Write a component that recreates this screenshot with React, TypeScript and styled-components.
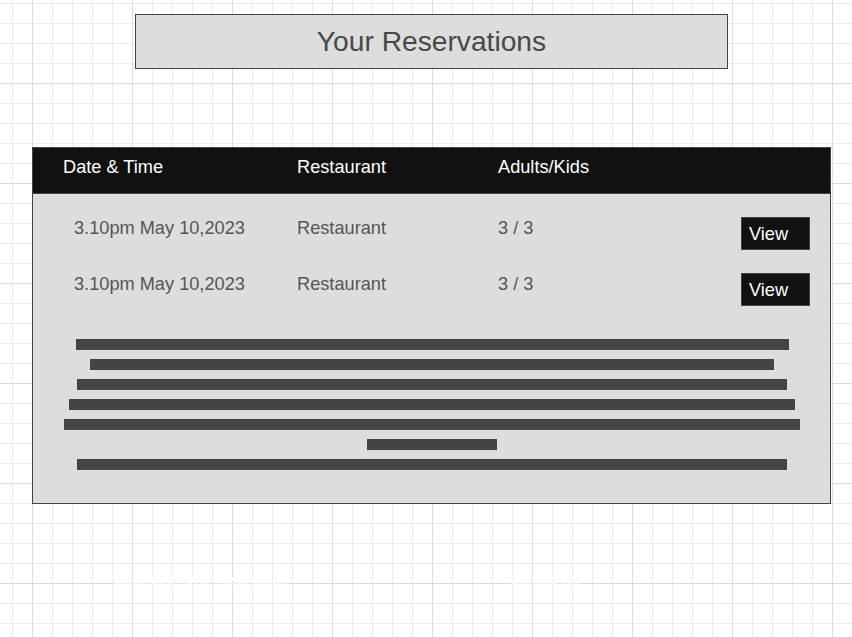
import React from 'react';
import styled, { createGlobalStyle } from 'styled-components';

const GlobalStyle = createGlobalStyle`
    html, body {
        margin: 0;
        padding: 0;
    }
    body {
        font-family: 'Liberation Sans', Arial, sans-serif;
        background-color: #fff;
        background-image:
            linear-gradient(to right, #dcdcdc 1px, transparent 1px),
            linear-gradient(to bottom, #dcdcdc 1px, transparent 1px),
            linear-gradient(to right, #ececec 1px, transparent 1px),
            linear-gradient(to bottom, #ececec 1px, transparent 1px);
        background-size: 100px 100px, 100px 100px, 20px 20px, 20px 20px;
        background-position: 32px 0, 0 83px, 12px 0, 0 3px;
        min-height: 637px;
    }
`;

const Page = styled.div`
    width: 799px;
    padding: 14px 0 0 32px;
    display: flex;
    flex-direction: column;
`;

const TitleBox = styled.div`
    margin-left: 103px;
    width: 591px;
    height: 53px;
    border: 1px solid #444;
    background: #ddd;
    display: flex;
    align-items: center;
    justify-content: center;
    color: #484848;
    font-size: 28.2px;
`;

const Panel = styled.section`
    margin-top: 78px;
    border: 1px solid #444;
    background: #ddd;
`;

const COLS = '264px 201px 1fr auto';

const HeaderRow = styled.div`
    display: grid;
    grid-template-columns: ${COLS};
    height: 46px;
    background: #111;
    border-bottom: 1px solid #444;
    color: #fff;
    font-size: 18.2px;
    padding-top: 9px;
    box-sizing: border-box;
`;

const HeadCell = styled.div<{ $indent?: number }>`
    padding-left: ${(p) => p.$indent ?? 0}px;
`;

const Rows = styled.div`
    display: flex;
    flex-direction: column;
    gap: 23px;
    padding-top: 23px;
`;

const Row = styled.div`
    display: grid;
    grid-template-columns: ${COLS};
    align-items: start;
    color: #555;
    font-size: 18.2px;
    height: 33px;
`;

const Cell = styled.div<{ $indent?: number }>`
    padding: 1px 0 0 ${(p) => p.$indent ?? 0}px;
    line-height: 21px;
`;

const ViewButton = styled.button`
    width: 69px;
    height: 33px;
    margin-right: 20px;
    padding: 2px 0 0 7px;
    text-align: left;
    background: #111;
    color: #fff;
    border: 1px solid #444;
    font-family: 'Liberation Sans', Arial, sans-serif;
    font-size: 18.2px;
    cursor: pointer;
`;

const Lines = styled.div`
    display: flex;
    flex-direction: column;
    align-items: center;
    gap: 9px;
    padding: 33px 0 33px 1px;
`;

const Line = styled.div<{ $w: number }>`
    width: ${(p) => p.$w}px;
    height: 11px;
    background: #444;
`;

const Footer = styled.footer`
    display: flex;
    padding: 68px 0 0 82px;
    color: #fff;
    font-size: 14px;
    gap: 222px;
`;

const reservations = [
    { when: '3.10pm May 10,2023', place: 'Restaurant', guests: '3 / 3' },
    { when: '3.10pm May 10,2023', place: 'Restaurant', guests: '3 / 3' },
];

const lineWidths = [713, 684, 710, 726, 736, 130, 710];

const App: React.FC = () => (
    <>
        <GlobalStyle />
        <Page>
            <TitleBox>Your Reservations</TitleBox>
            <Panel>
                <HeaderRow>
                    <HeadCell $indent={30}>Date &amp; Time</HeadCell>
                    <HeadCell>Restaurant</HeadCell>
                    <HeadCell>Adults/Kids</HeadCell>
                    <HeadCell />
                </HeaderRow>
                <Rows>
                    {reservations.map((r, i) => (
                        <Row key={i}>
                            <Cell $indent={41}>{r.when}</Cell>
                            <Cell>{r.place}</Cell>
                            <Cell>{r.guests}</Cell>
                            <ViewButton>View</ViewButton>
                        </Row>
                    ))}
                </Rows>
                <Lines>
                    {lineWidths.map((w, i) => (
                        <Line key={i} $w={w} />
                    ))}
                </Lines>
            </Panel>
            <Footer>
                <span>Copyright 2023 Reservation</span>
                <span>Contact Us</span>
            </Footer>
        </Page>
    </>
);

export default App;
